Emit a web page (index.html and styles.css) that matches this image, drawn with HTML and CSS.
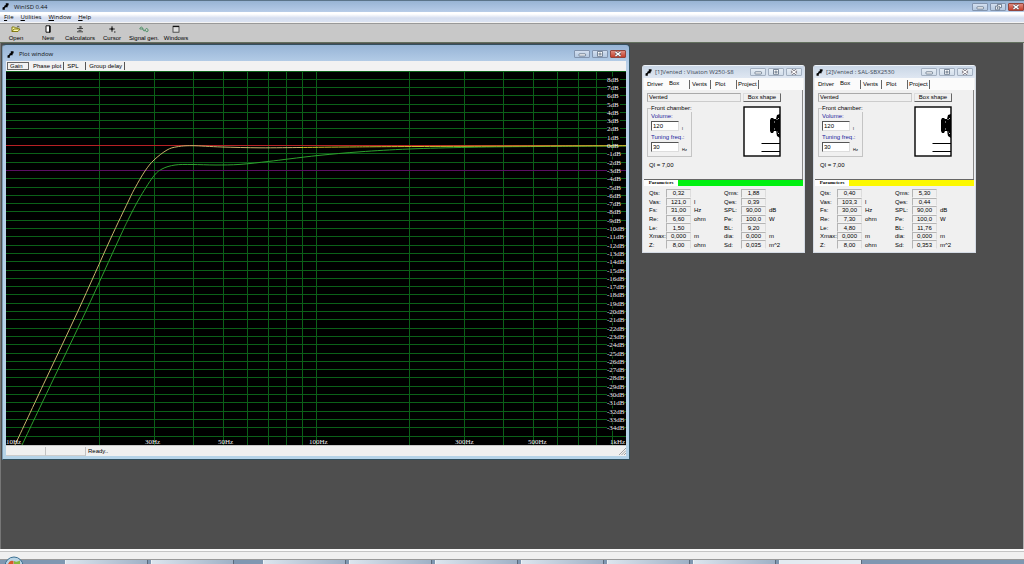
FILE: index.html
```
<!DOCTYPE html>
<html lang="en">
<head>
<meta charset="utf-8">
<title>WinISD 0.44</title>
<link rel="stylesheet" href="styles.css">
</head>
<body>
<svg width="0" height="0" class="defs" aria-hidden="true">
  <symbol id="logo" viewBox="0 0 8 8"><path d="M4.300 0.300H7.500V2.600L6.400 3.200V4.800H4.400L3.200 5.600V7.700H.6V5.200L2.600 4.400V3L4.300 2.400Z" fill="#000"/></symbol>
  <symbol id="min" viewBox="0 0 14 8"><rect x="4" y="3.800" width="6.500" height="2.200" rx=".5" fill="#fff" stroke="#5c6c80" stroke-width=".8"/></symbol>
  <symbol id="max" viewBox="0 0 14 8"><path d="M4.500 1.500H9.500V6.300H4.500ZM6 3.200H8V4.800H6Z" fill="#fff" stroke="#5c6c80" stroke-width=".8"/></symbol>
  <symbol id="restore" viewBox="0 0 14 8"><path d="M6.500 3V1.400H10.500V4.600H9M4.500 3.200H8.600V6.800H4.500ZM6 4.600H7.200V5.400H6Z" fill="#fff" stroke="#5c6c80" stroke-width=".8"/></symbol>
  <symbol id="close" viewBox="0 0 14 8"><path d="M4.500 2L9.500 6M9.500 2L4.500 6" stroke="#5c5560" stroke-width="2.600"/><path d="M4.500 2L9.500 6M9.500 2L4.500 6" stroke="#fff" stroke-width="1.400"/></symbol>
  <symbol id="speaker" viewBox="0 0 38 51">
    <rect x="1" y="1" width="36" height="49" fill="#fff" stroke="#000" stroke-width="1.400"/>
    <path d="M37 8L34 9L33 13H31L30 12H28L27 14V25L28 27H30L31 25H33L34 30L37 32Z" fill="#000"/>
    <path d="M31.500 15.500v1M34 13v1M35.500 12v1M31.500 22.500v1M34 25.500v1M35.500 27v1" stroke="#fff" stroke-width=".8"/>
    <path d="M18.500 37.500H37M18.500 45.500H37" stroke="#000" stroke-width="1"/>
  </symbol>
</svg>
<div class="app">
  <header class="titlebar">
    <svg class="logo"><use href="#logo"/></svg>
    <h1 class="title">WinISD 0.44</h1>
    <div class="controls">
      <button class="ctl" aria-label="Minimize"><svg><use href="#min"/></svg></button>
      <button class="ctl" aria-label="Restore"><svg><use href="#restore"/></svg></button>
      <button class="ctl red" aria-label="Close"><svg><use href="#close"/></svg></button>
    </div>
  </header>
  <nav class="menu">
    <button><u>F</u>ile</button><button><u>U</u>tilities</button><button><u>W</u>indow</button><button><u>H</u>elp</button>
  </nav>
  <div class="toolbar">
    <button><svg viewBox="0 0 10 8"><path d="M1 6.500V2H3.500L4.500 3H7V4M1 6.500L3 4H9L7 6.500Z" fill="#fffbb0" stroke="#777000" stroke-width=".9"/><path d="M6 1.400H8V2.400" fill="none" stroke="#333" stroke-width=".6"/></svg>Open</button>
    <button><svg viewBox="0 0 10 8"><path d="M3 .8H7V7.200H3Z" fill="#fff" stroke="#000" stroke-width=".9"/><path d="M6.800 1V7.400" stroke="#000" stroke-width="1.300"/></svg>New</button>
    <button><svg viewBox="0 0 10 8"><path d="M2 3.500H8M5 1V3.500M5 2H7M2 6.800H8M3.500 5.300H6.500" fill="none" stroke="#333" stroke-width=".9"/></svg>Calculators</button>
    <button><svg viewBox="0 0 10 8"><path d="M5 1V7M2 4H8" stroke="#222" stroke-width=".8"/><circle cx="5" cy="4" r="1.400" fill="#222"/><path d="M7 7H8.500" stroke="#222"/></svg>Cursor</button>
    <button><svg viewBox="0 0 10 8"><path d="M.8 4C1.200 1.500 3.500 1.500 4 4S5.500 6.500 6 5S8.500 2.500 9 5S6.500 7 6 5M.8 4H4" fill="none" stroke="#348352" stroke-width=".8"/></svg>Signal gen.</button>
    <button><svg viewBox="0 0 10 8"><rect x="2" y="1.200" width="6" height="6" fill="#ddd" stroke="#333" stroke-width=".8"/><path d="M2 1.500H8" stroke="#111" stroke-width="1.200"/></svg>Windows</button>
  </div>
  <main class="desktop">
    <section class="win plot-win">
      <header class="wintitle">
        <svg class="logo"><use href="#logo"/></svg>
        <h2 class="title">Plot window</h2>
        <div class="controls">
          <button class="ctl" aria-label="Minimize"><svg><use href="#min"/></svg></button>
          <button class="ctl" aria-label="Maximize"><svg><use href="#max"/></svg></button>
          <button class="ctl red" aria-label="Close"><svg><use href="#close"/></svg></button>
        </div>
      </header>
      <div class="plot-tabs"><button class="active">Gain</button><button>Phase plot</button><button class="wide">SPL</button><button>Group delay</button></div>
      <svg class="plot" id="plot" viewBox="0 0 620 374" role="img" aria-label="Gain plot"></svg>
      <footer class="plot-status"><span class="cell"></span><span class="cell"></span><span class="ready">Ready..</span>
        <svg class="grip" viewBox="0 0 8 8"><path d="M1 8L8 1M3.500 8L8 3.500M6 8L8 6" stroke="#999" stroke-width=".9"/></svg></footer>
    </section>

    <section class="win box-win first">
      <header class="wintitle">
        <svg class="logo"><use href="#logo"/></svg>
        <h2 class="title">[1]Vented : Visaton W250-S8</h2>
        <div class="controls">
          <button class="ctl" aria-label="Minimize"><svg><use href="#min"/></svg></button>
          <button class="ctl" aria-label="Maximize"><svg><use href="#max"/></svg></button>
          <button class="ctl" aria-label="Close"><svg><use href="#close"/></svg></button>
        </div>
      </header>
      <div class="box-tabs"><button>Driver</button><button class="active">Box</button><button>Vents</button><button>Plot</button><button>Project</button></div>
      <div class="box-body">
        <div class="type">Vented</div>
        <button class="shape">Box shape</button>
        <fieldset>
          <legend>Front chamber:</legend>
          <label for="v1">Volume:</label>
          <div class="field"><input id="v1" value="120"><small>l</small></div>
          <label for="t1">Tuning freq.:</label>
          <div class="field"><input id="t1" value="30"><small>Hz</small></div>
        </fieldset>
        <svg class="speaker"><use href="#speaker"/></svg>
        <p class="ql">Ql = 7,00</p>
      </div>
      <div class="params-head"><span>Parameters</span><i class="green"></i></div>
      <table>
        <tr><th>Qts:</th><td>0,32</td><td class="unit"></td><th>Qms:</th><td>1,88</td><td class="unit"></td></tr>
        <tr><th>Vas:</th><td>121,0</td><td class="unit">l</td><th>Qes:</th><td>0,39</td><td class="unit"></td></tr>
        <tr><th>Fs:</th><td>31,00</td><td class="unit">Hz</td><th>SPL:</th><td>90,00</td><td class="unit">dB</td></tr>
        <tr><th>Re:</th><td>6,60</td><td class="unit">ohm</td><th>Pe:</th><td>100,0</td><td class="unit">W</td></tr>
        <tr><th>Le:</th><td>1,50</td><td class="unit"></td><th>BL:</th><td>9,20</td><td class="unit"></td></tr>
        <tr><th>Xmax:</th><td>0,000</td><td class="unit">m</td><th>dia:</th><td>0,000</td><td class="unit">m</td></tr>
        <tr><th>Z:</th><td>8,00</td><td class="unit">ohm</td><th>Sd:</th><td>0,035</td><td class="unit">m^2</td></tr>
      </table>
    </section>

    <section class="win box-win second">
      <header class="wintitle">
        <svg class="logo"><use href="#logo"/></svg>
        <h2 class="title">[2]Vented : SAL-SBX2530</h2>
        <div class="controls">
          <button class="ctl" aria-label="Minimize"><svg><use href="#min"/></svg></button>
          <button class="ctl" aria-label="Maximize"><svg><use href="#max"/></svg></button>
          <button class="ctl" aria-label="Close"><svg><use href="#close"/></svg></button>
        </div>
      </header>
      <div class="box-tabs"><button>Driver</button><button class="active">Box</button><button>Vents</button><button>Plot</button><button>Project</button></div>
      <div class="box-body">
        <div class="type">Vented</div>
        <button class="shape">Box shape</button>
        <fieldset>
          <legend>Front chamber:</legend>
          <label for="v2">Volume:</label>
          <div class="field"><input id="v2" value="120"><small>l</small></div>
          <label for="t2">Tuning freq.:</label>
          <div class="field"><input id="t2" value="30"><small>Hz</small></div>
        </fieldset>
        <svg class="speaker"><use href="#speaker"/></svg>
        <p class="ql">Ql = 7,00</p>
      </div>
      <div class="params-head"><span>Parameters</span><i class="yellow"></i></div>
      <table>
        <tr><th>Qts:</th><td>0,40</td><td class="unit"></td><th>Qms:</th><td>5,30</td><td class="unit"></td></tr>
        <tr><th>Vas:</th><td>103,3</td><td class="unit">l</td><th>Qes:</th><td>0,44</td><td class="unit"></td></tr>
        <tr><th>Fs:</th><td>30,00</td><td class="unit">Hz</td><th>SPL:</th><td>90,00</td><td class="unit">dB</td></tr>
        <tr><th>Re:</th><td>7,30</td><td class="unit">ohm</td><th>Pe:</th><td>100,0</td><td class="unit">W</td></tr>
        <tr><th>Le:</th><td>4,80</td><td class="unit"></td><th>BL:</th><td>11,76</td><td class="unit"></td></tr>
        <tr><th>Xmax:</th><td>0,000</td><td class="unit">m</td><th>dia:</th><td>0,000</td><td class="unit">m</td></tr>
        <tr><th>Z:</th><td>8,00</td><td class="unit">ohm</td><th>Sd:</th><td>0,353</td><td class="unit">m^2</td></tr>
      </table>
    </section>
  </main>
  <div class="app-status"></div>
  <footer class="taskbar">
    <svg class="orb" viewBox="0 0 20 8"><circle cx="10" cy="10" r="9" fill="#b9d4e4" stroke="#3b7093"/><path d="M4 8Q6 3.500 9.500 5V8Z" fill="#d8582a"/><path d="M10 5Q13 6.500 16 4.500V8H10Z" fill="#86b83c"/></svg>
    <span class="task"></span><span class="task"></span><span class="task later"></span><span class="task"></span><span class="task"></span><span class="task"></span><span class="task"></span><span class="task"></span><span class="task lit"></span>
  </footer>
</div>
<script src="plot.js"></script>
</body>
</html>
```
FILE: styles.css
```
* { box-sizing: border-box; }
body {
  margin: 0;
  font: 6px/8px "Liberation Sans", sans-serif;
  color: #000;
}
button, input { font: inherit; color: inherit; border: 0; padding: 0; margin: 0; background: none; }
h1, h2, p { margin: 0; font: inherit; }
svg { display: block; }
.defs { position: absolute; }

.app { min-height: 100vh; display: flex; flex-direction: column; background: #4e4e4e; overflow: hidden; }

.titlebar {
  height: 12px; display: flex; align-items: center; padding-left: 2px;
  border-top: 1px solid #5b7489;
  background: linear-gradient(#98b4d4, #b7cce8);
}
.logo { width: 7px; height: 7px; flex: none; }
.title { flex: 1; font: 6px/8px "Open Sans", sans-serif; color: #111; margin-left: 5px; white-space: nowrap; }
.controls { display: flex; gap: 2px; }
.ctl {
  width: 16px; height: 8px; border: 1px solid #8294ae; border-radius: 1px;
  background: linear-gradient(#d3dfef, #b4c8e0);
}
.ctl svg { width: 14px; height: 8px; margin: -1px 0; }
.red { background: linear-gradient(#dd8c80, #c63f2b); border-color: #93443c; }

.menu {
  height: 11px; display: flex; align-items: center; gap: 7px; padding-left: 4px;
  font: 6px/8px "Open Sans", sans-serif;
  background: linear-gradient(#fff 20%, #d6deef 60%, #dbe3f2);
  border-bottom: 1px solid #f4f4f4;
}
.toolbar {
  height: 20px; display: flex; align-items: flex-end; background: #c8c8c8;
  border-top: 1px solid #999; border-bottom: 1px solid #63705f;
}
.toolbar button { width: 32px; display: flex; flex-direction: column; align-items: center; gap: 1px; white-space: nowrap; }
.toolbar svg { width: 10px; height: 8px; }

.desktop { flex: 1; position: relative; border-left: 1px solid #777; border-right: 1px solid #b0b0b0; }
.win { position: absolute; display: flex; flex-direction: column; }
.wintitle { display: flex; align-items: center; padding-left: 1px; }

.plot-win {
  left: 1px; top: 1px; width: 628px;
  padding: 0 3px 3px;
  border: 1px solid #33505e; border-left-color: #7e9db5;
  border-radius: 4px 4px 0 0;
  background: linear-gradient(#97b4d6, #b9d1ea 20px, #b5d3e8);
}
.plot-win .wintitle { height: 16px; padding-top: 2px; }
.plot-tabs { height: 10px; display: flex; align-items: center; background: #f2f2f2; }
.plot-tabs button { height: 8px; padding: 0 2px 0 3px; border-right: 1px solid #555; text-align: left; }
.plot-tabs .active { width: 22px; margin: 0 1px; border: 1px solid #666; line-height: 6px; padding: 0 0 0 2px; }
.plot-tabs .wide { width: 22px; }
.plot { width: 100%; height: auto; background: #000; }
.plot text { font: 7px "Liberation Serif", serif; fill: #eee; }
.plot .grid { stroke: #0b6018; stroke-width: 1; }
.plot .curve { fill: none; stroke-width: 1; }
.plot-status { height: 11px; display: flex; align-items: center; background: #f0f0f0; border-top: 1px solid #c9c9c9; }
.cell { width: 40px; height: 9px; border-right: 1px solid #c2c2c2; border-bottom: 1px solid #ccc; }
.ready { flex: 1; padding-left: 2px; }
.grip { width: 8px; height: 8px; }

.box-win {
  width: 163px; top: 22px; padding: 0 1px 1px;
  background: #f0f0f0; border: 1px solid #d4dbe4; border-top-color: #eef3f8; border-radius: 3px 3px 0 0;
}
.first { left: 641px; }
.second { left: 812px; }
.box-win .wintitle { height: 12px; margin: 0 -1px; background: linear-gradient(#c9d6e6, #dfe7f2); padding: 0 2px; }
.box-win .title { color: #3d4956; margin-left: 3px; }
.box-win .ctl { background: linear-gradient(#e6edf5, #d3deeb); border-color: #a2afc0; }
.box-tabs { display: flex; height: 12px; align-items: center; background: #fbfbfb; padding-left: 2px; }
.box-tabs button { width: 21px; height: 9px; padding: 0 0 0 2px; border-right: 1px solid #666; text-align: left; }
.box-tabs button:first-child { border: 0; padding-left: 1px; }
.box-tabs .active { width: 23px; line-height: 6px; padding-bottom: 2px; }
.box-tabs button:nth-child(4) { width: 26px; padding-left: 4px; }
.box-tabs button:last-child { width: 22px; padding-left: 1px; }

.box-body {
  display: grid; grid-template-columns: 94px 38px; column-gap: 2px;
  padding: 3px 0 0 3px; height: 89px; align-content: start;
  border-right: 1px solid #888;
}
.type { height: 9px; border: 1px solid #aaa; border-right-color: #ccc; border-bottom-color: #ccc; padding-left: 1px; line-height: 7px; }
.shape { height: 9px; line-height: 7px; border: 1px solid #ddd; border-right-color: #666; border-bottom-color: #666; }
fieldset { width: 45px; height: 53px; min-width: 0; margin: 2px 0 0; padding: 0 0 0 3px; border: 1px solid #c4c4c4; white-space: nowrap; }
legend { padding: 0; margin: 0; line-height: 8px; }
fieldset label { display: block; color: #1c1c9c; line-height: 9px; }
.field { display: flex; align-items: flex-end; gap: 3px; margin-bottom: 2px; }
.field input { width: 28px; height: 10px; background: #fff; border: 1px solid #555; border-right-color: #ddd; border-bottom-color: #ddd; padding-left: 1px; }
.field small { font-size: 4px; line-height: 5px; }
.speaker { width: 38px; height: 51px; margin-top: 4px; }
.ql { margin-top: 4px; padding-left: 2px; }

.params-head { display: flex; height: 7px; border-top: 1px solid #666; }
.params-head span { width: 34px; font: bold 5px/6px "Liberation Serif", serif; background: #fff; text-align: center; }
.params-head i { flex: 1; }
.green { background: #00f010; }
.yellow { background: #fcf800; }

table { border-collapse: separate; border-spacing: 0; margin: 3px 0 2px 5px; width: 140px; height: 60px; table-layout: fixed; line-height: 6px; }
th, td { padding: 0; font-weight: normal; white-space: nowrap; }
th { width: 17px; text-align: left; }
td { width: 25px; text-align: center; border: 1px solid #b4b4b4; border-right-color: #ddd; border-bottom-color: #f4f4f4; }
td.unit { width: 33px; border: 0; text-align: left; padding-left: 3px; }
td.unit:last-child { width: 23px; }

.app-status { height: 10px; background: #f0f0f0; border-top: 2px solid #fafafa; box-shadow: inset 0 1px #c4c4c4; }
.taskbar { height: 5px; display: flex; gap: 3px; border-top: 1px solid #999; background: #7f97b1; }
.orb { width: 20px; height: 8px; margin: -4px 38px 0 4px; }
.task { width: 83px; border-left: 1px solid #eef2f6; border-right: 1px solid #5c6b7c; background: linear-gradient(90deg, #dce5ee, #9fb1c6); }
.later { margin-left: 26px; }
.lit { background: #e3ebf1; }
```
FILE: plot.js
```
const svg = document.getElementById("plot");
const NS = "http://www.w3.org/2000/svg";
const W = 620, H = 374, ZERO = 75, STEP = 8.3;

function add(tag, attrs, text) {
  const el = document.createElementNS(NS, tag);
  for (const key in attrs) el.setAttribute(key, attrs[key]);
  if (text) el.textContent = text;
  svg.appendChild(el);
}
function line(x1, y1, x2, y2) {
  add("line", { x1, y1, x2, y2, class: "grid" });
}
const yOf = db => Math.round(ZERO - db * STEP) - 0.5;
const xOf = hz => Math.round(Math.log10(hz / 10) * 310) + 0.5;

for (let db = 8; db >= -35; db--) line(0, yOf(db), W, yOf(db));
for (let base = 10; base <= 100; base *= 10)
  for (let n = 2; n <= 10 && base * n < 1000; n++) line(xOf(base * n), 0, xOf(base * n), H);
line(0, 0.5, W, 0.5);

for (const [db, stroke] of [[0, "#b82024"], [-3, "#5a0e64"]])
  add("line", { x1: 0, x2: W, y1: yOf(db), y2: yOf(db), stroke });

// Smooth curve through the sample points (Catmull-Rom to Bezier).
function curve(points, stroke) {
  let d = `M${points[0]}`;
  for (let i = 0; i < points.length - 1; i++) {
    const p0 = points[i - 1] || points[i], p1 = points[i];
    const p2 = points[i + 1], p3 = points[i + 2] || p2;
    d += `C${p1[0] + (p2[0] - p0[0]) / 6},${p1[1] + (p2[1] - p0[1]) / 6} ` +
         `${p2[0] - (p3[0] - p1[0]) / 6},${p2[1] - (p3[1] - p1[1]) / 6} ${p2}`;
  }
  add("path", { d, stroke, class: "curve" });
}
curve([[16, 374], [47, 309], [80, 240], [113, 168], [123, 147], [133, 128], [147, 106], [156, 98], [169, 94],
  [186, 93.5], [210, 94], [234, 93.4], [262, 90.5], [284, 87.8], [314, 84.3], [354, 80.8], [403, 78],
  [464, 76.3], [534, 75.5], [620, 75]], "#2ea02e");
curve([[9, 374], [39.5, 309], [72, 240], [104, 169], [122, 131], [129, 117], [139, 100], [148, 89], [161, 79],
  [171, 75.8], [186, 74.7], [216, 76], [254, 76.8], [294, 76.5]], "#c9b46c");
curve([[294, 76.5], [340, 76], [414, 75.5], [620, 74.7]], "#cfc22c");

for (let db = 8; db >= -34; db--) {
  const label = db + "dB";
  const y = yOf(db);
  if (db) add("rect", { x: 601, y: y - 3, width: label.length > 4 ? 17 : 13, height: 6, fill: "#000" });
  add("text", { x: 601, y: y + 2 }, label);
}
for (const [x, label] of [[0, "10Hz"], [139, "30Hz"], [212, "50Hz"], [303, "100Hz"], [449, "300Hz"], [522, "500Hz"], [604, "1kHz"]])
  add("text", { x, y: 373 }, label);
```
